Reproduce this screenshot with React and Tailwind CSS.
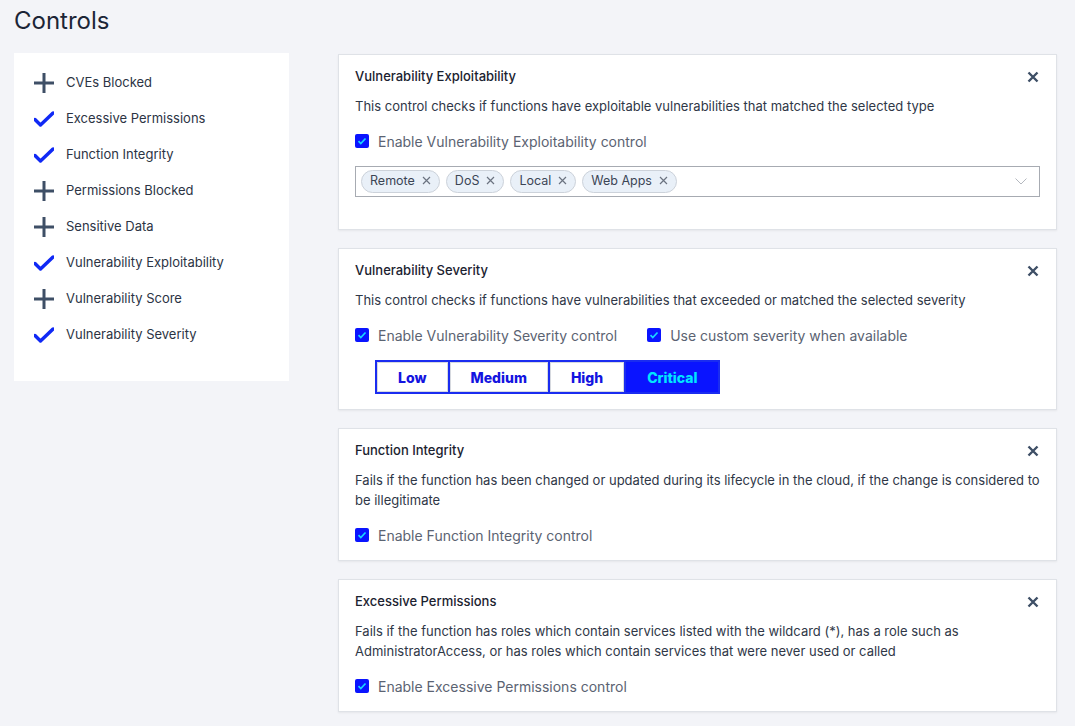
import React, { useState } from "react";

const font = { fontFamily: "Inter, 'Noto Sans', sans-serif" };

const sidebarItems = [
  { label: "CVEs Blocked", on: false },
  { label: "Excessive Permissions", on: true },
  { label: "Function Integrity", on: true },
  { label: "Permissions Blocked", on: false },
  { label: "Sensitive Data", on: false },
  { label: "Vulnerability Exploitability", on: true },
  { label: "Vulnerability Score", on: false },
  { label: "Vulnerability Severity", on: true },
];

const PlusIcon = () => (
  <svg width="20" height="20" viewBox="0 0 20 20" className="shrink-0">
    <path d="M10 0v20M0 10h20" stroke="#3e4f66" strokeWidth="3" fill="none" />
  </svg>
);

const CheckIcon = () => (
  <svg width="20" height="20" viewBox="0 0 20 20" className="shrink-0">
    <path
      d="M1 10.5l5.5 5.5L19 4"
      stroke="#1029f5"
      strokeWidth="3.4"
      fill="none"
      strokeLinecap="round"
      strokeLinejoin="round"
    />
  </svg>
);

const CloseIcon = () => (
  <svg width="12" height="12" viewBox="0 0 12 12">
    <path d="M1.5 1.5l9 9M10.5 1.5l-9 9" stroke="#3e4f66" strokeWidth="2.4" fill="none" />
  </svg>
);

const Checkbox = ({ label }) => (
  <label className="flex items-center h-5">
    <span className="w-[14px] h-[14px] bg-[#0a14ff] rounded-[2px] flex items-center justify-center">
      <svg width="10" height="10" viewBox="0 0 10 10">
        <path d="M1.5 5.2l2.3 2.3L8.5 2.5" stroke="#19d7ff" strokeWidth="1.7" fill="none" />
      </svg>
    </span>
    <span className="ml-[9px] text-[14px] text-[#5b6372]">{label}</span>
  </label>
);

const Card = ({ title, description, children }) => (
  <div className="bg-white border border-[#dfe2e7] shadow-[0_1px_2px_rgba(0,0,0,0.06)] px-4 pt-3 pb-[15px]">
    <div className="flex items-center justify-between h-5">
      <h3 className="text-[13px] font-medium text-[#1b2230]">{title}</h3>
      <button className="mr-[1px]">
        <CloseIcon />
      </button>
    </div>
    <p className="mt-[9px] text-[13px] leading-[20px] text-[#2f3747]">{description}</p>
    {children}
  </div>
);

const Chip = ({ label }) => (
  <span className="flex items-center h-[23px] pl-[8px] pr-[8px] rounded-full bg-[#e9f0f8] border border-[#ccd2da] text-[12.5px] text-[#3b4555]">
    {label}
    <svg width="9" height="9" viewBox="0 0 9 9" className="ml-[7px] -mt-[3px]">
      <path d="M1 1l7 7M8 1l-7 7" stroke="#6b7380" strokeWidth="1.2" fill="none" />
    </svg>
  </span>
);

export default function App() {
  const [severity, setSeverity] = useState("Critical");
  const levels = ["Low", "Medium", "High", "Critical"];

  return (
    <div style={font} className="min-h-screen bg-[#f3f4f8] pl-[14px] pr-[18px] pb-4">
      <h1 className="text-[24px] leading-[30px] pt-[6px] text-[#1b2536]">Controls</h1>

      <div className="flex items-start mt-[17px]">
        <div className="w-[275px] bg-white pt-[20px] pb-[20px] shrink-0">
          {sidebarItems.map((item) => (
            <div key={item.label} className="flex items-center h-[20px] mb-4 pl-5">
              {item.on ? <CheckIcon /> : <PlusIcon />}
              <span className="ml-3 text-[13px] text-[#2c3444]">{item.label}</span>
            </div>
          ))}
        </div>

        <div className="flex-1 ml-[49px] mt-[1px] flex flex-col gap-[18px]">
          <Card
            title="Vulnerability Exploitability"
            description="This control checks if functions have exploitable vulnerabilities that matched the selected type"
          >
            <div className="mt-[15px]">
              <Checkbox label="Enable Vulnerability Exploitability control" />
            </div>
            <div className="mt-[15px] mb-[17px] h-[31px] border border-[#a7abb2] flex items-center pl-[5px] pr-[12px]">
              <div className="flex items-center gap-[6px] flex-1">
                <Chip label="Remote" />
                <Chip label="DoS" />
                <Chip label="Local" />
                <Chip label="Web Apps" />
              </div>
              <svg width="12" height="7" viewBox="0 0 12 7">
                <path d="M0.5 0.5l5.5 5.5 5.5-5.5" stroke="#b4b8bf" strokeWidth="1" fill="none" />
              </svg>
            </div>
          </Card>

          <Card
            title="Vulnerability Severity"
            description="This control checks if functions have vulnerabilities that exceeded or matched the selected severity"
          >
            <div className="mt-[15px] flex items-center gap-[30px]">
              <Checkbox label="Enable Vulnerability Severity control" />
              <Checkbox label="Use custom severity when available" />
            </div>
            <div className="mt-[15px] ml-5 inline-flex border-2 border-[#1a2cf0]">
              {levels.map((lvl, i) => (
                <button
                  key={lvl}
                  onClick={() => setSeverity(lvl)}
                  className={
                    (i > 0 ? "border-l-2 border-[#1a2cf0] " : "") +
                    (severity === lvl
                      ? "bg-[#0a14ff] text-[#00e5ff] "
                      : "bg-white text-[#1414e0] shadow-[inset_0_0_0_1px_#d6d9df] ") +
                    "h-[30px] px-[21px] text-[14px] font-extrabold"
                  }
                >
                  {lvl}
                </button>
              ))}
            </div>
          </Card>

          <Card
            title="Function Integrity"
            description="Fails if the function has been changed or updated during its lifecycle in the cloud, if the change is considered to be illegitimate"
          >
            <div className="mt-[15px]">
              <Checkbox label="Enable Function Integrity control" />
            </div>
          </Card>

          <Card
            title="Excessive Permissions"
            description={
              <>
                Fails if the function has roles which contain services listed with the wildcard (*), has a role such as
                <br />
                AdministratorAccess, or has roles which contain services that were never used or called
              </>
            }
          >
            <div className="mt-[15px]">
              <Checkbox label="Enable Excessive Permissions control" />
            </div>
          </Card>
        </div>
      </div>
    </div>
  );
}
